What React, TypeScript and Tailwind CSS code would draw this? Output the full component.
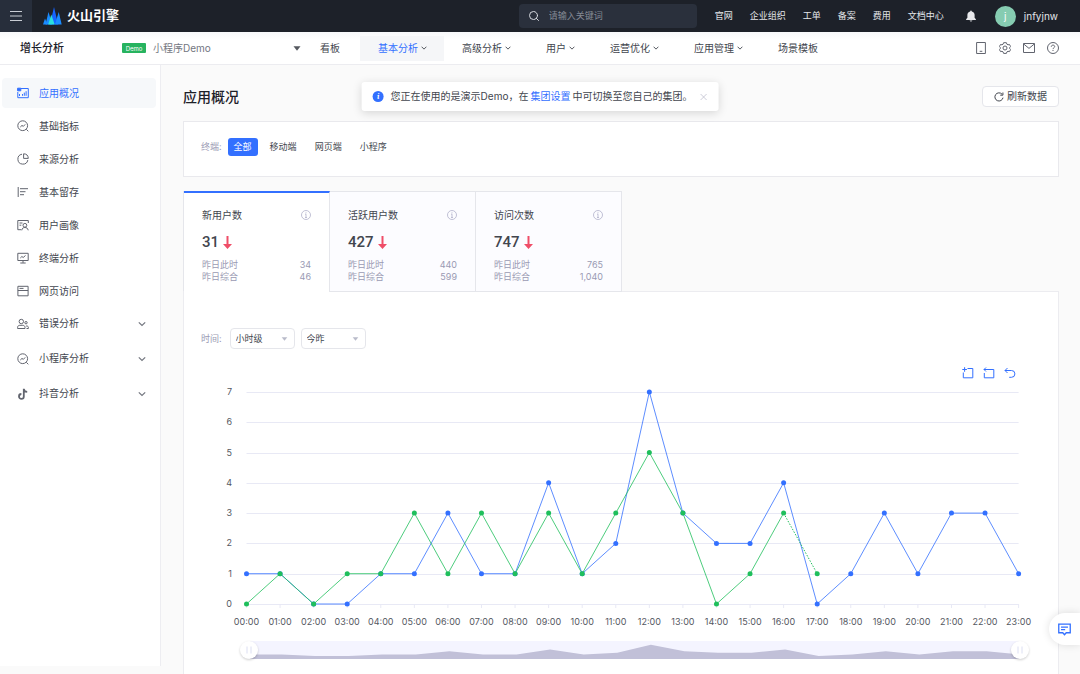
import type { ReactNode } from "react";
import clsx from "clsx";
import { Search } from "lucide-react";

const topLinks = ["官网", "企业组织", "工单", "备案", "费用", "文档中心"];

const menus = [
  { label: "看板" },
  { label: "基本分析", dropdown: true, active: true },
  { label: "高级分析", dropdown: true },
  { label: "用户", dropdown: true },
  { label: "运营优化", dropdown: true },
  { label: "应用管理", dropdown: true },
  { label: "场景模板" },
];

const metrics = [
  { name: "新用户数", value: "31", sameTime: "34", total: "46" },
  { name: "活跃用户数", value: "427", sameTime: "440", total: "599" },
  { name: "访问次数", value: "747", sameTime: "765", total: "1,040" },
];

const yesterday = [1, 1, 0, 0, 1, 1, 3, 1, 1, 4, 1, 2, 7, 3, 2, 2, 4, 0, 1, 3, 1, 3, 3, 1];
const today = [0, 1, 0, 1, 1, 3, 1, 3, 1, 3, 1, 3, 5, 3, 0, 1, 3, 1];

function Icon({ children, className }: { children: ReactNode; className?: string }) {
  return (
    <svg
      viewBox="0 0 12 12"
      fill="none"
      stroke="currentColor"
      strokeWidth="1"
      className={clsx("shrink-0", className ?? "size-3")}
      aria-hidden="true"
    >
      {children}
    </svg>
  );
}

const trendIcon = (
  <>
    <circle cx="5.7" cy="5.7" r="4.9" />
    <path d="M9.3 9.3l2 2M3.3 7l1.7-1.6 1.3 1L8.2 4.4" />
  </>
);

const sideItems: { label: string; icon: ReactNode; active?: boolean }[] = [
  {
    label: "应用概况",
    active: true,
    icon: (
      <>
        <path d="M4 1.5h7.3v9.2H.8V5M5.5 8.8V7M7.3 8.8V5.6M9.1 8.8V4.2" />
        <path d="M.6 1.2h3.2v2.6H.6zM2.5 7v2" fill="currentColor" />
      </>
    ),
  },
  { label: "基础指标", icon: trendIcon },
  {
    label: "来源分析",
    icon: (
      <>
        <path d="M5 1.2a5 5 0 1 0 5.8 5.9" />
        <path d="M6.6.8v4.6h4.7A4.8 4.8 0 0 0 6.6.8z" />
      </>
    ),
  },
  { label: "基本留存", icon: <path d="M1.2 1v10M3 2.7h8M3 5.7h5.5M3 8.7h4" /> },
  {
    label: "用户画像",
    icon: (
      <>
        <path d="M11.3 4V1.5H.8v9.2h3.4M2.5 4h3M2.5 6.2h1.8M4.8 11.3c.2-2 1.4-2.8 3.1-2.8s2.9.8 3.3 2.8" />
        <circle cx="7.9" cy="6.3" r="1.9" />
      </>
    ),
  },
  {
    label: "终端分析",
    icon: <path d="M.8 1.3h10.4v7.2H.8zM6 8.5v2.3M3.3 11h5.4M3.3 6l1.6-1.5 1.3 1 2.3-2" />,
  },
  { label: "网页访问", icon: <path d="M.9 1.3h10.2v9.5H.9zM.9 5.5h10.2M2.5 3.4h4" /> },
];

const sideGroups: { label: string; icon: ReactNode }[] = [
  {
    label: "错误分析",
    icon: (
      <>
        <circle cx="4.3" cy="3.5" r="2.2" />
        <path d="M.6 10.5V9.3c0-1.2 1-2 2.2-2h3c1.2 0 2.2.8 2.2 2v1.2zM9 8h.8c.9 0 1.6.6 1.6 1.4v1.1H9.5" />
        <circle cx="9" cy="4.7" r="1.2" />
      </>
    ),
  },
  { label: "小程序分析", icon: trendIcon },
  {
    label: "抖音分析",
    icon: (
      <path
        d="M6.8.8v7.6a2.4 2.4 0 1 1-2.4-2.4M6.8.8c.2 1.9 1.4 3 3.4 3.1"
        strokeWidth="1.8"
      />
    ),
  },
];

function Chevron({ className }: { className?: string }) {
  return (
    <svg viewBox="0 0 8 8" fill="none" stroke="currentColor" strokeWidth="1.2" className={className} aria-hidden="true">
      <path d="M.8 2.3L4 5.5l3.2-3.2" />
    </svg>
  );
}

function Caret({ className }: { className?: string }) {
  return (
    <svg viewBox="0 0 8 5" fill="currentColor" className={clsx("pointer-events-none absolute", className)} aria-hidden="true">
      <path d="M.5.3h7L4 4.8z" />
    </svg>
  );
}

function TopBar() {
  return (
    <header className="flex h-8 shrink-0 items-center bg-[#1d2129] text-[9px] text-[#e4e6ea]">
      <button aria-label="菜单" className="flex size-8 items-center justify-center bg-[#272e3b]">
        <svg viewBox="0 0 12 12" stroke="#c9cdd4" className="size-3">
          <path d="M0 1.5h12M0 6h12M0 10.5h12" />
        </svg>
      </button>
      <a href="#" className="ml-[11px] flex items-center gap-[5px] text-[13px] font-bold text-white">
        <svg viewBox="0 0 19 18" className="h-[18px] w-[19px]" aria-hidden="true">
          <path d="M7 17.5L11 0l4.2 17.5z" fill="#1664ff" />
          <path d="M2.5 17.5L5.5 5l3.8 12.5z" fill="#1a8cff" />
          <path d="M12 17.5L15.7 5l3 12.5z" fill="#1a8cff" />
          <path d="M0 17.5l2-6 2.5 6z" fill="#1a8cff" />
          <path d="M5.2 17.5L8.3 7.5l3.4 10z" fill="#2be0dc" />
        </svg>
        火山引擎
      </a>
      <label className="ml-auto flex h-6 w-[178px] items-center gap-[9px] rounded-sm bg-[#2a303c] px-[9px]">
        <Search className="size-3 shrink-0 text-[#d5d8de]" />
        <input
          type="search"
          aria-label="搜索"
          placeholder="请输入关键词"
          className="w-full bg-transparent outline-none placeholder:text-[#858a95]"
        />
      </label>
      <nav className="ml-[18px] flex gap-[17px]">
        {topLinks.map((link) => (
          <a key={link} href="#">
            {link}
          </a>
        ))}
      </nav>
      <button aria-label="通知" className="ml-[21px]">
        <svg viewBox="0 0 12 12" fill="#e8e9ec" className="size-3">
          <path d="M6 .6c.5 0 .8.3.8.8 1.8.4 2.8 1.7 2.8 3.4v3l1.3 1.5v.6H1.1v-.6l1.3-1.5v-3c0-1.7 1-3 2.8-3.4 0-.5.3-.8.8-.8zM4.6 10.4h2.8c-.2.7-.7 1.1-1.4 1.1s-1.2-.4-1.4-1.1z" />
        </svg>
      </button>
      <button className="mr-[22px] ml-[18px] flex items-center gap-2 text-[10px]">
        <span className="flex size-[21px] items-center justify-center rounded-full bg-[#86ccb1] text-white">
          j
        </span>
        jnfyjnw
      </button>
    </header>
  );
}

function SubHeader() {
  return (
    <div className="flex h-[33px] shrink-0 items-center border-b border-[#ececf0] bg-linear-to-b from-[#f7f8fa] to-white to-25% text-[10px] text-[#42464e]">
      <div className="flex w-[302px] shrink-0 items-center pl-5">
        <h2 className="w-[102px] text-[11px] font-medium text-[#1d2129]">增长分析</h2>
        <span className="flex h-[10px] w-6 items-center justify-center rounded-[1px] bg-[#27b35f] text-[6px] text-white">
          Demo
        </span>
        <div className="relative ml-[7px] flex flex-1 items-center">
          <select
            aria-label="应用"
            className="w-full appearance-none bg-transparent text-[10px] text-[#73767f] outline-none"
          >
            <option>小程序Demo</option>
          </select>
          <Caret className="right-px h-[5px] w-2 text-[#55585f]" />
        </div>
      </div>
      <nav className="flex">
        {menus.map((menu) => (
          <a
            key={menu.label}
            href="#"
            className={clsx(
              "flex h-[25px] items-center gap-[3px] pl-[18px] whitespace-nowrap",
              menu.dropdown ? "pr-[17px]" : "pr-5",
              menu.active && "bg-[#f5f6f8]"
            )}
          >
            <span className={menu.active ? "text-[#3370ff]" : ""}>{menu.label}</span>
            {menu.dropdown && <Chevron className="size-[6px]" />}
          </a>
        ))}
      </nav>
      <div className="ml-auto flex items-center gap-3 pr-[21px] text-[#62656f]">
        <button aria-label="移动端">
          <Icon>
            <path d="M1.6.5h8.8v11H1.6zM4.7 9.3h2.6" />
          </Icon>
        </button>
        <button aria-label="设置">
          <Icon>
            <path d="M4.6.7h2.8l.5 1.5 1.1.6 1.5-.3 1.1 2.1-1 1.1v.7l1 1.1-1.1 2.1-1.5-.3-1.1.6-.5 1.5H4.6l-.5-1.5-1.1-.6-1.5.3L.4 7.5l1-1.1v-.7l-1-1.1 1.1-2.1 1.5.3 1.1-.6z" />
            <circle cx="6" cy="6" r="2" />
          </Icon>
        </button>
        <button aria-label="消息">
          <Icon>
            <path d="M.5 1.5h11v9H.5zM.7 2l5.3 4.4L11.3 2" />
          </Icon>
        </button>
        <button aria-label="帮助">
          <Icon>
            <circle cx="6" cy="6" r="5.5" />
            <path d="M4.3 4.8c0-1 .7-1.7 1.7-1.7s1.7.6 1.7 1.5c0 1.1-1.7 1.2-1.7 2.5M6 8v1" />
          </Icon>
        </button>
      </div>
    </div>
  );
}

function Sidebar() {
  return (
    <aside className="mb-2 w-[161px] shrink-0 border-r border-[#ededf1] bg-white pt-[13px] pl-[2px] text-[#42464e]">
      <nav className="flex flex-col gap-[3px]">
        {sideItems.map((item) => (
          <a
            key={item.label}
            href="#"
            className={clsx(
              "mr-1 flex h-[30px] items-center gap-[10px] rounded pl-[15px] text-[10px]",
              item.active && "bg-[#f6f8fa] text-[#3370ff]"
            )}
          >
            <Icon className={item.active ? "size-3" : "size-3 text-[#62656f]"}>{item.icon}</Icon>
            {item.label}
          </a>
        ))}
      </nav>
      <div className="flex flex-col">
        {sideGroups.map((group) => (
          <button key={group.label} className="flex h-[35px] items-center gap-[10px] pr-[14px] pl-[15px] text-[10px]">
            <Icon className="size-3 text-[#62656f]">{group.icon}</Icon>
            {group.label}
            <Chevron className="ml-auto size-2 text-[#73767f]" />
          </button>
        ))}
      </div>
    </aside>
  );
}

function MetricCard({ name, value, sameTime, total, active }: (typeof metrics)[number] & { active: boolean }) {
  return (
    <button
      className={clsx(
        "-mb-px flex w-[146px] flex-col items-stretch border-r border-[#e5e6eb] px-[18px] pb-2 text-left",
        active
          ? "border-t-2 border-t-[#3370ff] bg-white pt-[14px]"
          : "border-t border-b bg-[#fcfcff] pt-[15px]"
      )}
    >
      <span className="flex h-4 items-center justify-between text-[10px] text-[#42464e]">
        {name}
        <Icon className="size-[10px] text-[#b5b5cc]">
          <circle cx="6" cy="6" r="5.4" />
          <path d="M6 5v4M4.8 9h2.4M4.8 5H6M6 2.8V4" />
        </Icon>
      </span>
      <span className="mt-[9px] flex h-5 items-center gap-1 font-[Roboto] text-[15px] font-medium text-[#42464e]">
        {value}
        <svg viewBox="0 0 9 13" fill="#ef4e68" className="h-[13px] w-[9px]" aria-hidden="true">
          <path d="M3.5 0h2v8H9L4.5 13 0 8h3.5z" />
        </svg>
      </span>
      <span className="mt-[7px] flex justify-between text-[9px] leading-[12px] text-[#9a9ab3]">
        昨日此时<span>{sameTime}</span>
      </span>
      <span className="flex justify-between text-[9px] leading-[12px] text-[#9a9ab3]">
        昨日综合<span>{total}</span>
      </span>
    </button>
  );
}

const px = (i: number) => 62.5 + i * 33.57;
const py = (v: number) => 224 - v * 30.3;
const line = (values: number[], from = 0) =>
  values.map((v, i) => `${px(i + from)},${py(v)}`).join(" ");

function TrendChart() {
  const area = yesterday.map((v, i) => `${64 + i * 33.57},${276 - v * 1.6}`).join(" ");

  return (
    <svg viewBox="0 0 874 294" className="w-full" role="img" aria-label="新用户数趋势">
      {[0, 1, 2, 3, 4, 5, 6, 7].map((v) => (
        <g key={v}>
          <path d={`M62.5 ${Math.round(py(v)) + 0.5}H834.6`} stroke="#e8e9f5" />
          <text x="48" y={py(v) + 3} textAnchor="end" fontSize="9" fill="#55585f">
            {v}
          </text>
        </g>
      ))}
      {yesterday.map((_, i) => (
        <g key={i}>
          <path d={`M${px(i)} 224v4`} stroke="#e8e9f5" />
          <text x={px(i)} y="245" textAnchor="middle" fontSize="9" fill="#55585f">
            {String(i).padStart(2, "0")}:00
          </text>
        </g>
      ))}

      <polyline points={line(yesterday)} fill="none" stroke="#3370ff" strokeWidth="0.8" />
      {yesterday.map((v, i) => (
        <circle key={i} cx={px(i)} cy={py(v)} r="2.5" fill="#3370ff" />
      ))}
      <polyline points={line(today.slice(0, 17))} fill="none" stroke="#1fbf5c" strokeWidth="0.8" />
      <polyline points={line(today.slice(16), 16)} fill="none" stroke="#1fbf5c" strokeDasharray="1.5 1.5" />
      {today.map((v, i) => (
        <circle key={i} cx={px(i)} cy={py(v)} r="2.5" fill="#1fbf5c" />
      ))}

      {/* range slider */}
      <rect x="64" y="261" width="772" height="18" fill="#f4f4ff" />
      <polygon points={`64,279 ${area} 836,279`} fill="#c1c0d8" />
      {[65, 836].map((x) => (
        <g key={x}>
          <circle cx={x} cy="270" r="9" fill="#fff" className="drop-shadow-[0_1px_1px_rgba(0,0,0,0.2)]" />
          <path d={`M${x - 2} 266.5v7M${x + 2} 266.5v7`} stroke="#dcdff2" />
        </g>
      ))}
    </svg>
  );
}

function TimeSelect({ label, value }: { label: string; value: string }) {
  return (
    <div className="relative flex items-center">
      <select
        aria-label={label}
        className="h-[21px] w-[65px] appearance-none rounded-sm border border-[#e5e6eb] bg-white px-[5px] text-[9px] text-[#42464e] outline-none"
      >
        <option>{value}</option>
      </select>
      <Caret className="right-[7px] h-1 w-[7px] text-[#b9bbca]" />
    </div>
  );
}

function Overview() {
  return (
    <main className="min-w-0 flex-1 overflow-hidden bg-[#fafafa] pt-[21px] pr-[21px] pl-[22px]">
      <div className="flex h-[21px] items-center justify-between">
        <h1 className="text-[14px] leading-none font-medium text-[#1d2129]">应用概况</h1>
        <button className="flex h-[21px] items-center gap-[3px] rounded-sm border border-[#e5e6eb] bg-white px-[11px] text-[10px] text-[#42464e]">
          <Icon className="size-[10px]">
            <path d="M10.8 6.8A4.9 4.9 0 1 1 9.6 2.6M10.7.6v3.2H7.5" strokeWidth="1.2" />
          </Icon>
          刷新数据
        </button>
      </div>

      <section className="mt-[14px] flex h-14 items-start gap-[6px] border border-[#e9e9ed] bg-white px-[17px] pt-4 text-[9px] text-[#42464e]">
        <span className="leading-[18px] text-[#9a9ab3]">终端:</span>
        <div className="flex gap-[6px]">
          {["全部", "移动端", "网页端", "小程序"].map((t, i) => (
            <button
              key={t}
              className={clsx("h-[18px] rounded-[3px] px-[6px]", i === 0 && "bg-[#3370ff] text-white")}
            >
              {t}
            </button>
          ))}
        </div>
      </section>

      <div className="relative mt-[14px] flex border-l border-[#e5e6eb]">
        {metrics.map((m, i) => (
          <MetricCard key={m.name} {...m} active={i === 0} />
        ))}
      </div>

      <section className="border border-[#ececf0] bg-white pt-9 pb-5">
        <div className="flex items-center gap-[6px] px-[17px] text-[9px]">
          <span className="mr-[2px] text-[#9a9ab3]">时间:</span>
          <TimeSelect label="时间粒度" value="小时级" />
          <TimeSelect label="时间范围" value="今昨" />
        </div>
        <div className="mt-[17px] flex h-[14px] items-center justify-end gap-[9px] pr-[42px] text-[#3370ff]">
          <button aria-label="区域缩放">
            <Icon>
              <path d="M5.5 1.5h5.3v9.3H1.3V5.5M2.6.2v4.6M.3 2.5h4.6" />
            </Icon>
          </button>
          <button aria-label="区域缩放还原">
            <Icon>
              <path d="M1.3 6v4.8h9.5V2.5H1M3 .5l-2 2 2 2" />
            </Icon>
          </button>
          <button aria-label="还原">
            <Icon>
              <path d="M3.5 1L1 3.5 3.5 6M1 3.5h6.5a3.4 3.4 0 0 1 0 6.8H5.2" />
            </Icon>
          </button>
        </div>
        <TrendChart />
      </section>
    </main>
  );
}

export default function App() {
  return (
    <div className="relative flex h-screen flex-col overflow-hidden bg-[#fafafa] font-['Inter','Noto_Sans_CJK_SC',sans-serif]">
      <TopBar />
      <SubHeader />
      <div className="flex min-h-0 flex-1">
        <Sidebar />
        <Overview />
      </div>

      <div
        role="status"
        className="absolute top-[82px] left-1/2 flex h-[29px] -translate-x-1/2 items-center rounded-[3px] bg-white px-[11px] text-[10px] whitespace-nowrap text-[#42464e] shadow-[0_2px_10px_rgba(0,0,0,0.15)]"
      >
        <span className="mr-[7px] flex size-[11px] items-center justify-center rounded-full bg-[#3370ff] font-serif text-[8px] font-bold text-white italic">
          i
        </span>
        您正在使用的是演示Demo，在
        <a href="#" className="mx-[2px] text-[#3370ff]">
          集团设置
        </a>
        中可切换至您自己的集团。
        <button aria-label="关闭" className="ml-[7px] text-[#b5b5c5]">
          <Icon className="size-2">
            <path d="M1.5 1.5l9 9M10.5 1.5l-9 9" />
          </Icon>
        </button>
      </div>

      <button
        aria-label="反馈"
        className="absolute top-[613px] right-0 flex h-8 w-[31px] items-center justify-center rounded-l-full bg-white text-[#3370ff] shadow-[0_0_8px_rgba(0,0,0,0.12)]"
      >
        <Icon className="size-[13px]">
          <path d="M.7 1h10.6v8H7.6L6 10.8 4.4 9H.7zM2.8 3.8h6.4M2.8 6.2h3.8" strokeWidth="1.2" />
        </Icon>
      </button>
    </div>
  );
}
